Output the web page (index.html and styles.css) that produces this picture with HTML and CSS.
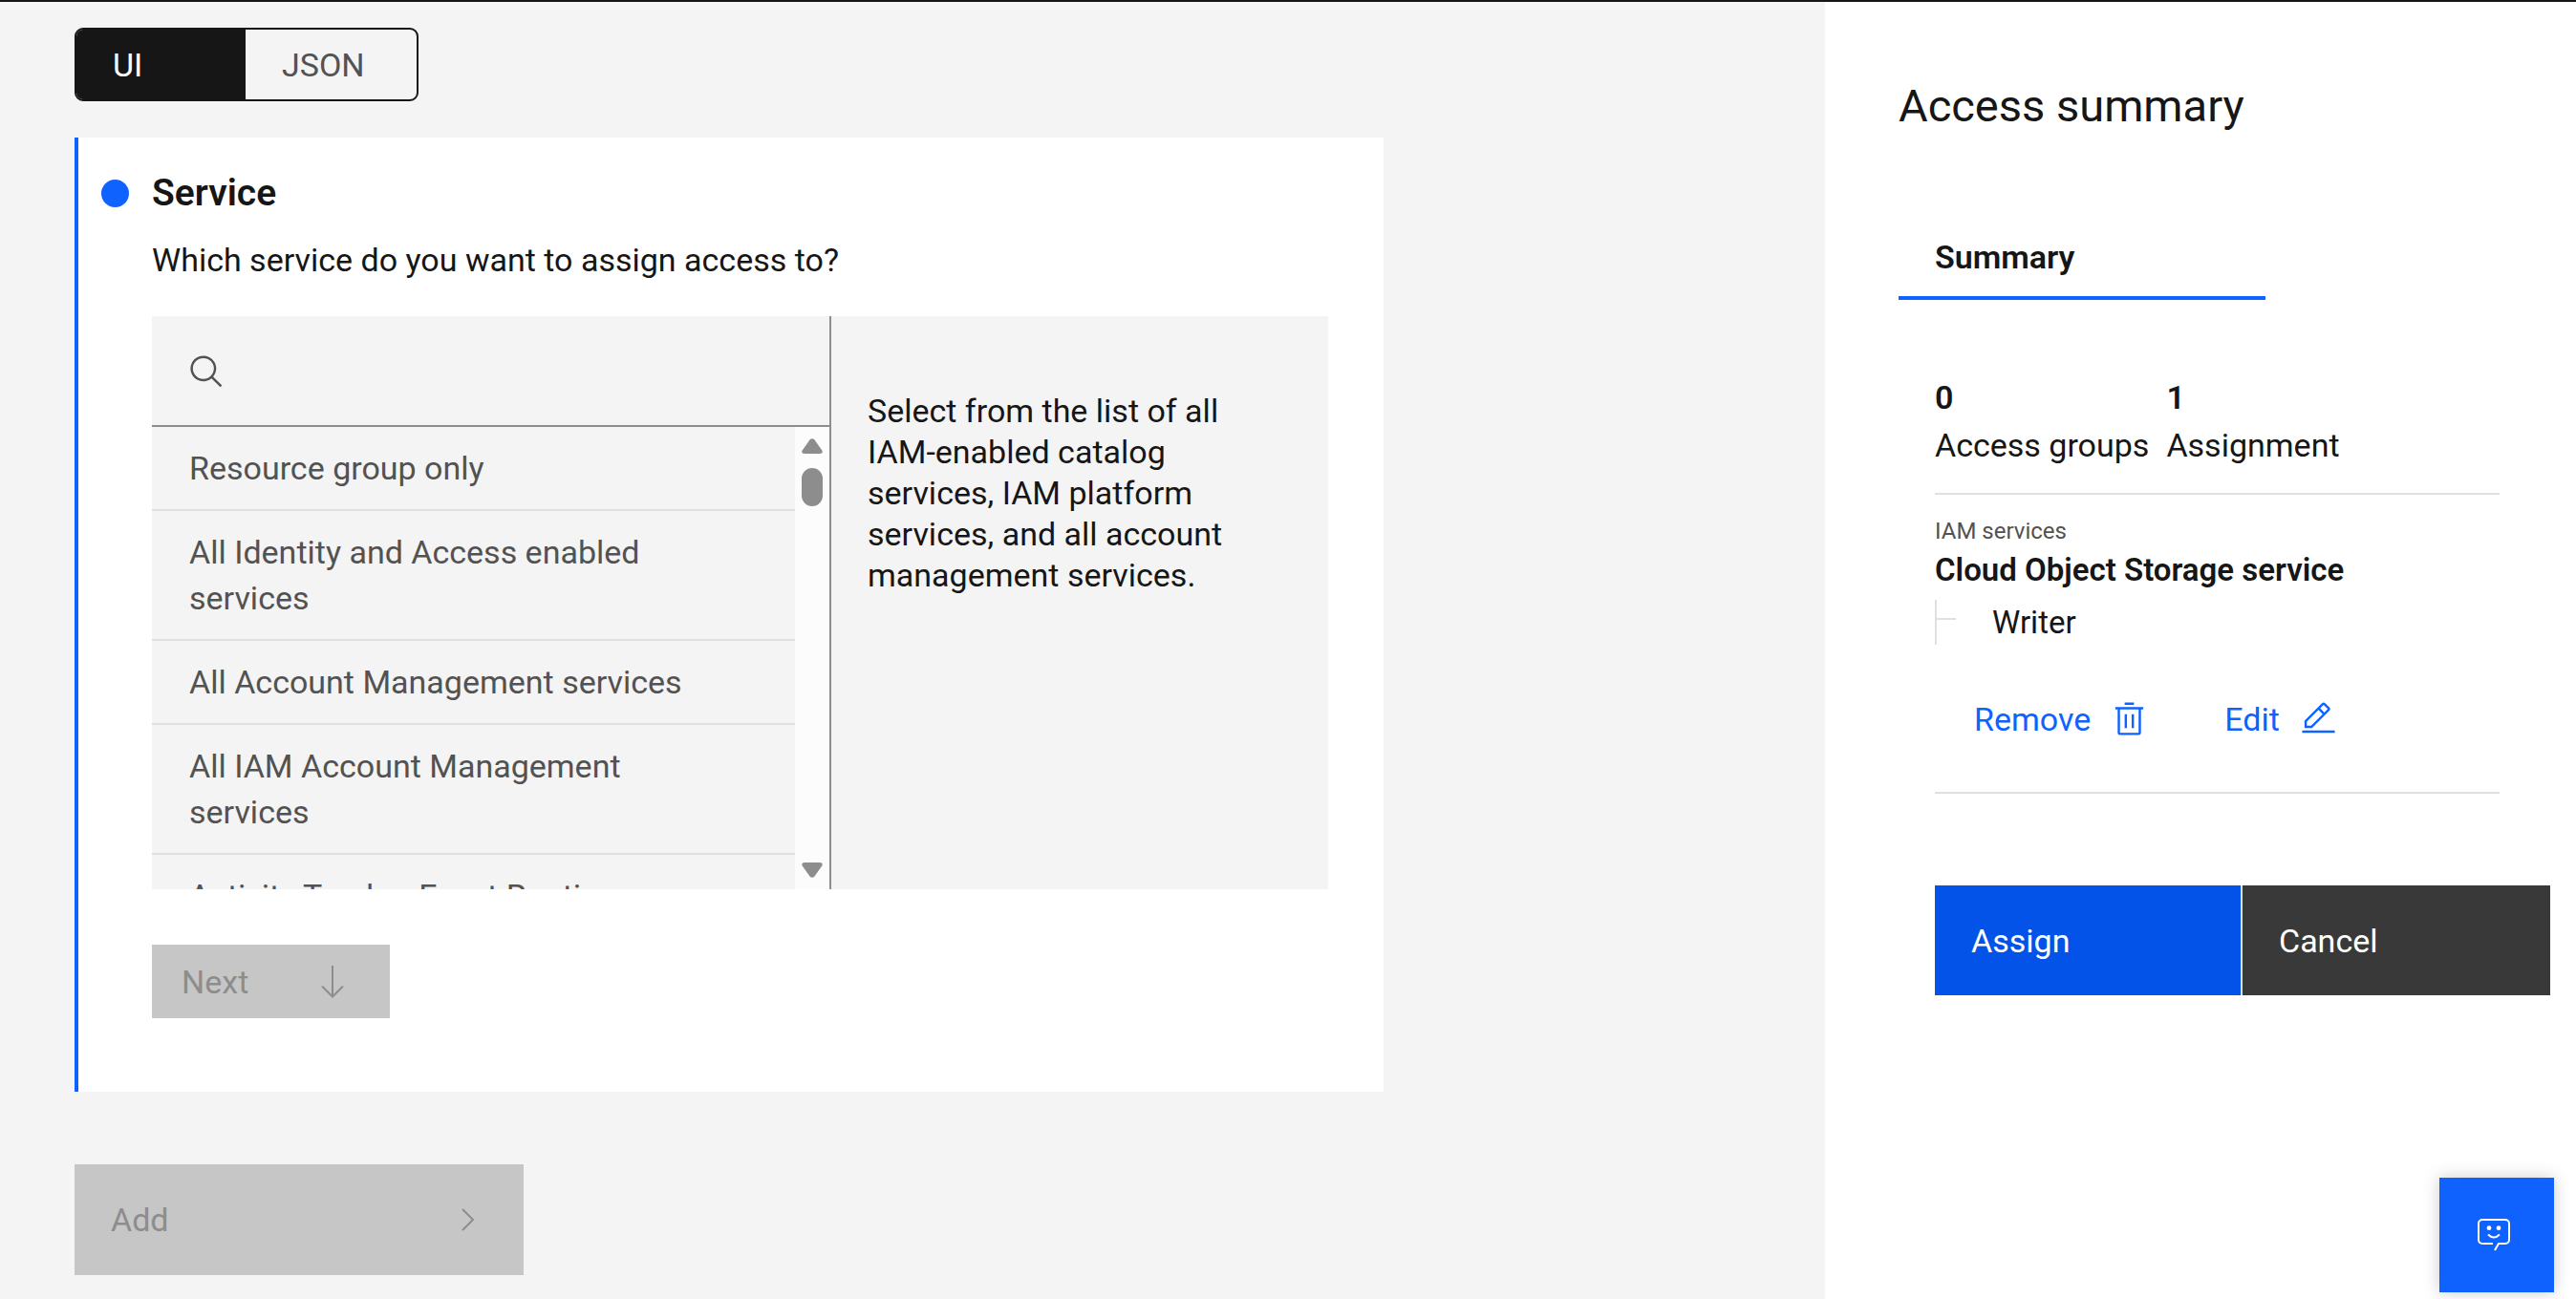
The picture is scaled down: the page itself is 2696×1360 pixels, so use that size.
FILE: index.html
```
<!DOCTYPE html>
<html lang="en">
<head>
<meta charset="utf-8">
<meta name="viewport" content="width=device-width, initial-scale=1">
<title>Assign access</title>
<link rel="stylesheet" href="styles.css">
</head>
<body>
<div class="page">
  <main class="builder">
    <div class="switcher" role="tablist" aria-label="Editor mode">
      <button class="switcher-option is-selected" type="button" role="tab" aria-selected="true">UI</button>
      <button class="switcher-option" type="button" role="tab" aria-selected="false">JSON</button>
    </div>

    <section class="step">
      <h2 class="step-title"><span class="step-dot"></span>Service</h2>
      <p class="step-question">Which service do you want to assign access to?</p>

      <div class="picker">
        <div class="picker-left">
          <label class="search" for="service-search" aria-label="Search services">
            <svg class="icon" viewBox="0 0 32 32" aria-hidden="true"><path d="M29 27.586l-7.552-7.552a11.018 11.018 0 1 0-1.414 1.414L27.586 29zM4 13a9 9 0 1 1 9 9 9.01 9.01 0 0 1-9-9z"/></svg>
            <input class="search-input" id="service-search" type="text">
          </label>
          <div class="options">
            <ul class="option-list">
              <li><button class="option" type="button">Resource group only</button></li>
              <li><button class="option" type="button">All Identity and Access enabled services</button></li>
              <li><button class="option" type="button">All Account Management services</button></li>
              <li><button class="option" type="button">All IAM Account Management services</button></li>
              <li><button class="option" type="button">Activity Tracker Event Routing</button></li>
            </ul>
            <div class="scrollbar" aria-hidden="true">
              <svg class="scroll-arrow" viewBox="0 0 22 16"><path d="M8.500 1.500Q11-1.200 13.500 1.500L21.300 12.500Q22.800 16 19 16H3Q-.8 16 .7 12.500z"/></svg>
              <span class="scroll-thumb"></span>
              <svg class="scroll-arrow scroll-down" viewBox="0 0 22 16"><path d="M8.500 14.500Q11 17.200 13.500 14.500L21.300 3.500Q22.800 0 19 0H3Q-.8 0 .7 3.500z"/></svg>
            </div>
          </div>
        </div>
        <p class="picker-help">Select from the list of all IAM-enabled catalog services, IAM platform services, and all account management services.</p>
      </div>

      <button class="button-next" type="button" disabled>Next
        <svg class="icon-arrow" viewBox="0 0 24 34" aria-hidden="true"><path d="M12 0V32M1 21.500L12 32.500L23 21.500"/></svg>
      </button>
    </section>

    <button class="button-add" type="button" disabled>Add
      <svg class="icon-chevron" viewBox="0 0 14 24" aria-hidden="true"><path d="M1 1L12 12L1 23"/></svg>
    </button>
  </main>

  <aside class="summary">
    <h1 class="summary-title">Access summary</h1>
    <div role="tablist">
      <button class="tab" type="button" role="tab" aria-selected="true">Summary</button>
    </div>

    <div class="summary-body">
      <dl class="stats">
        <div class="stat"><dd class="stat-value">0</dd><dt>Access groups</dt></div>
        <div class="stat"><dd class="stat-value">1</dd><dt>Assignment</dt></div>
      </dl>
      <section class="assignment">
        <p class="assignment-kind">IAM services</p>
        <h3 class="assignment-name">Cloud Object Storage service</h3>
        <div class="role"><span class="branch"></span>Writer</div>
        <div class="assignment-actions">
          <button class="link-button" type="button">Remove
            <svg class="icon" viewBox="0 0 32 32" aria-hidden="true"><path d="M12 12H14V24H12zM18 12H20V24H18zM4 6V8H6V28a2 2 0 0 0 2 2H24a2 2 0 0 0 2-2V8h2V6zM8 28V8H24V28zM12 2H20V4H12z"/></svg>
          </button>
          <button class="link-button" type="button">Edit
            <svg class="icon" viewBox="0 0 32 32" aria-hidden="true"><path d="M2 26H30V28H2zM25.400 9c.8-.8.8-2 0-2.800l-3.600-3.600c-.8-.8-2-.8-2.800 0l-15 15V24h6.400L25.400 9zM20.400 4L24 7.600l-3 3L17.400 7 20.400 4zM6 22v-3.600l10-10 3.600 3.600-10 10H6z"/></svg>
          </button>
        </div>
      </section>
      <div class="footer-buttons">
        <button class="button-assign" type="button">Assign</button>
        <button class="button-cancel" type="button">Cancel</button>
      </div>
    </div>
  </aside>
</div>

<button class="chat" type="button" aria-label="Open chat">
  <svg class="chat-icon" viewBox="0 0 34 34" aria-hidden="true">
    <path d="M16 26H5a4 4 0 0 1-4-4V5a4 4 0 0 1 4-4H29a4 4 0 0 1 4 4V22a4 4 0 0 1-4 4H22L18 33"/>
    <path d="M11 16.500Q17 22.500 23 16.500"/>
    <circle class="chat-eye" cx="12" cy="9.700" r="2.400"/>
    <circle class="chat-eye" cx="22" cy="9.700" r="2.400"/>
  </svg>
</button>
</body>
</html>
```
FILE: styles.css
```
* {
  box-sizing: border-box;
}

body,
h1,
h2,
h3,
p,
ul,
dl,
dd {
  margin: 0;
  padding: 0;
}

body {
  background: #f4f4f4;
  color: #161616;
  font-family: Roboto, "Noto Sans", sans-serif;
  font-size: 34px;
  line-height: 48px;
}

button,
input {
  margin: 0;
  padding: 0;
  border: 0;
  border-radius: 0;
  background: none;
  color: inherit;
  font: inherit;
  text-align: left;
}

.icon {
  flex: none;
  width: 39px;
  height: 39px;
  fill: currentColor;
}

.page {
  display: grid;
  grid-template-columns: minmax(0, 1fr) 786px;
  min-height: 100vh;
  border-top: 2px solid #161616;
}

/* Policy builder */

.builder {
  display: flex;
  flex-direction: column;
  align-items: flex-start;
  padding: 27px 78px 24px;
}

.switcher {
  display: grid;
  grid-template-columns: 177fr 179fr;
  width: 360px;
  height: 77px;
  overflow: hidden;
  border: 2px solid #161616;
  border-radius: 9px;
}

.switcher-option {
  padding-left: 38px;
  color: #525252;
}

.switcher-option.is-selected {
  background: #161616;
  color: #fff;
}

.step {
  width: 100%;
  max-width: 1370px;
  margin: 38px 0 76px;
  padding: 33px 58px 77px 77px;
  border-left: 4px solid #0f62fe;
  background: #fff;
}

.step-title {
  display: flex;
  align-items: center;
  gap: 24px;
  margin: 0 0 21px -53px;
  font-size: 39px;
  font-weight: 600;
  line-height: 50px;
}

.step-dot {
  width: 29px;
  height: 29px;
  border-radius: 50%;
  background: #0f62fe;
}

.step-question {
  margin-bottom: 35px;
}

.picker {
  display: grid;
  grid-template-columns: 711fr 520fr;
  height: 600px;
  margin-bottom: 58px;
  background: #f4f4f4;
}

.picker-left {
  display: flex;
  flex-direction: column;
  min-height: 0;
  border-right: 2px solid #8d8d8d;
}

.search {
  display: flex;
  align-items: center;
  gap: 20px;
  height: 116px;
  padding: 2px 38px 0;
  border-bottom: 2px solid #8d8d8d;
  color: #525252;
}

.search-input {
  flex: 1;
  min-width: 0;
  outline: none;
}

.options {
  display: flex;
  flex: 1;
  min-height: 0;
}

.option-list {
  flex: 1;
  overflow: hidden;
  list-style: none;
}

.option {
  display: block;
  width: 100%;
  padding: 19px 77px 19px 39px;
  border-bottom: 2px solid #e0e0e0;
  color: #525252;
}

.scrollbar {
  display: flex;
  flex-direction: column;
  align-items: center;
  width: 36px;
  padding: 12px 0;
  background: #fcfcfc;
}

.scroll-arrow {
  width: 22px;
  height: 16px;
  fill: #8d8d8d;
}

.scroll-thumb {
  width: 22px;
  height: 40px;
  margin-top: 15px;
  border-radius: 11px;
  background: #8d8d8d;
}

.scroll-down {
  margin-top: auto;
}

.picker-help {
  padding: 78px 77px 0 38px;
  line-height: 43px;
}

.button-next,
.button-add {
  display: flex;
  align-items: center;
  justify-content: space-between;
  background: #c6c6c6;
  color: #8d8d8d;
}

.button-next {
  width: 249px;
  height: 77px;
  padding: 0 48px 0 31px;
}

.button-add {
  width: 470px;
  height: 116px;
  padding: 0 51px 0 38px;
}

.icon-arrow,
.icon-chevron {
  fill: none;
  stroke: currentColor;
  stroke-width: 2;
}

.icon-arrow {
  width: 24px;
  height: 34px;
}

.icon-chevron {
  width: 14px;
  height: 24px;
}

/* Access summary */

.summary {
  padding: 79px 27px 79px 77px;
  background: #fff;
}

.summary-title {
  margin-bottom: 85px;
  font-size: 47px;
  font-weight: 400;
  line-height: 60px;
}

.tab {
  width: 384px;
  padding: 19px 38px 17px;
  border-bottom: 4px solid #0f62fe;
  font-weight: 600;
}

.summary-body {
  padding: 77px 0 0 38px;
}

.stats {
  display: flex;
  gap: 18px;
  margin-right: 53px;
  padding-bottom: 25px;
  border-bottom: 2px solid #e0e0e0;
  line-height: 50px;
}

.stat {
  display: flex;
  flex-direction: column;
}

.stat-value {
  font-weight: 600;
}

.assignment {
  margin: 0 53px 96px 0;
  padding: 22px 0 38px;
  border-bottom: 2px solid #e0e0e0;
}

.assignment-kind {
  color: #525252;
  font-size: 24px;
  line-height: 32px;
}

.assignment-name {
  margin-bottom: 6px;
  font-size: 33px;
  font-weight: 600;
  line-height: 50px;
}

.role {
  display: flex;
  gap: 38px;
  font-size: 33px;
  line-height: 47px;
}

.branch {
  width: 22px;
  padding-top: 19px;
  border-left: 2px solid #e0e0e0;
}

.branch::before {
  content: "";
  display: block;
  height: 2px;
  background: #e0e0e0;
}

.assignment-actions {
  display: flex;
  gap: 80px;
  margin-top: 39px;
  padding-left: 41px;
}

.link-button {
  display: flex;
  align-items: center;
  gap: 21px;
  height: 77px;
  color: #0f62fe;
}

.footer-buttons {
  display: grid;
  grid-template-columns: 320fr 322fr;
  gap: 2px;
  background: #e0e0e0;
}

.button-assign,
.button-cancel {
  height: 115px;
  padding-left: 38px;
  color: #fff;
}

.button-assign {
  background: #0353e9;
}

.button-cancel {
  background: #393939;
}

.chat {
  position: fixed;
  right: 23px;
  bottom: 7px;
  display: grid;
  place-items: center;
  width: 120px;
  height: 120px;
  padding-right: 6px;
  background: #0f62fe;
  box-shadow: 0 0 16px rgba(0, 0, 0, 0.2);
}

.chat-icon {
  width: 34px;
  height: 34px;
  fill: none;
  stroke: #fff;
  stroke-width: 2;
}

.chat-eye {
  fill: #fff;
  stroke: none;
}
```
